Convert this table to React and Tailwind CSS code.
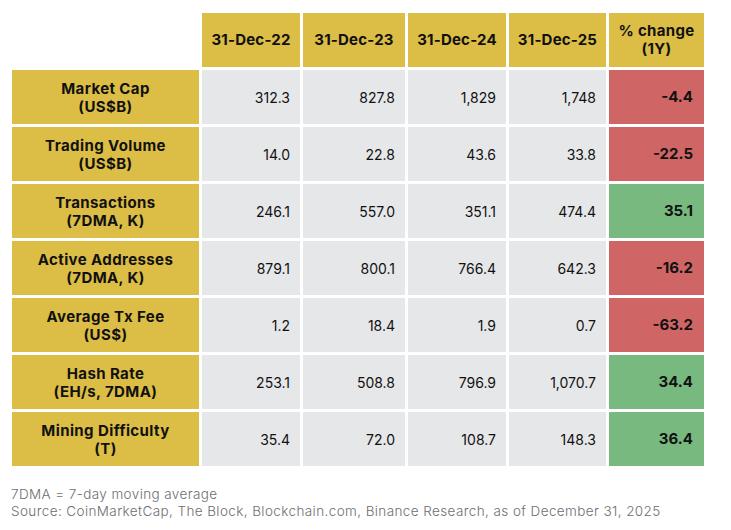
import React from "react";

const rows = [
  { label: ["Market Cap", "(US$B)"], v: ["312.3", "827.8", "1,829", "1,748"], c: "-4.4", pos: false },
  { label: ["Trading Volume", "(US$B)"], v: ["14.0", "22.8", "43.6", "33.8"], c: "-22.5", pos: false },
  { label: ["Transactions", "(7DMA, K)"], v: ["246.1", "557.0", "351.1", "474.4"], c: "35.1", pos: true },
  { label: ["Active Addresses", "(7DMA, K)"], v: ["879.1", "800.1", "766.4", "642.3"], c: "-16.2", pos: false },
  { label: ["Average Tx Fee", "(US$)"], v: ["1.2", "18.4", "1.9", "0.7"], c: "-63.2", pos: false },
  { label: ["Hash Rate", "(EH/s, 7DMA)"], v: ["253.1", "508.8", "796.9", "1,070.7"], c: "34.4", pos: true },
  { label: ["Mining Difficulty", "(T)"], v: ["35.4", "72.0", "108.7", "148.3"], c: "36.4", pos: true },
];

const headers = ["31-Dec-22", "31-Dec-23", "31-Dec-24", "31-Dec-25"];

export default function App() {
  return (
    <div className="w-[731px] h-[530px] bg-white text-[#111] font-['Inter','Liberation_Sans',sans-serif] pt-[13px] pl-[12px]">
      <div className="grid grid-cols-[187px_98px_102px_98px_97px_95px] auto-rows-[54px] gap-[3px]">
        <div />
        {headers.map((h) => (
          <div key={h} className="bg-[#dcbd45] flex items-center justify-center font-bold text-[15px] tracking-[0.2px]">
            {h}
          </div>
        ))}
        <div className="bg-[#dcbd45] flex flex-col items-center justify-center font-bold text-[15px] tracking-[0.3px] leading-[18px]">
          <span>% change</span>
          <span>(1Y)</span>
        </div>
        {rows.map((r) => (
          <React.Fragment key={r.label[0]}>
            <div className="bg-[#dcbd45] flex flex-col items-center justify-center font-bold text-[15px] tracking-[0.4px] leading-[18px] pt-[1px]">
              <span>{r.label[0]}</span>
              <span>{r.label[1]}</span>
            </div>
            {r.v.map((x, i) => (
              <div key={i} className="bg-[#e6e7e9] flex items-center justify-end pr-[10px] text-[14px]">
                {x}
              </div>
            ))}
            <div
              className={
                (r.pos ? "bg-[#77b97e]" : "bg-[#d06565]") +
                " flex items-center justify-end pr-[11px] text-[15px] font-bold"
              }
            >
              {r.c}
            </div>
          </React.Fragment>
        ))}
      </div>
      <div className="mt-[20px] -ml-[1px] text-[13.5px] tracking-[0.4px] leading-[17px] text-[#6e6e73] font-light">
        <div>7DMA = 7-day moving average</div>
        <div>Source: CoinMarketCap, The Block, Blockchain.com, Binance Research, as of December 31, 2025</div>
      </div>
    </div>
  );
}
